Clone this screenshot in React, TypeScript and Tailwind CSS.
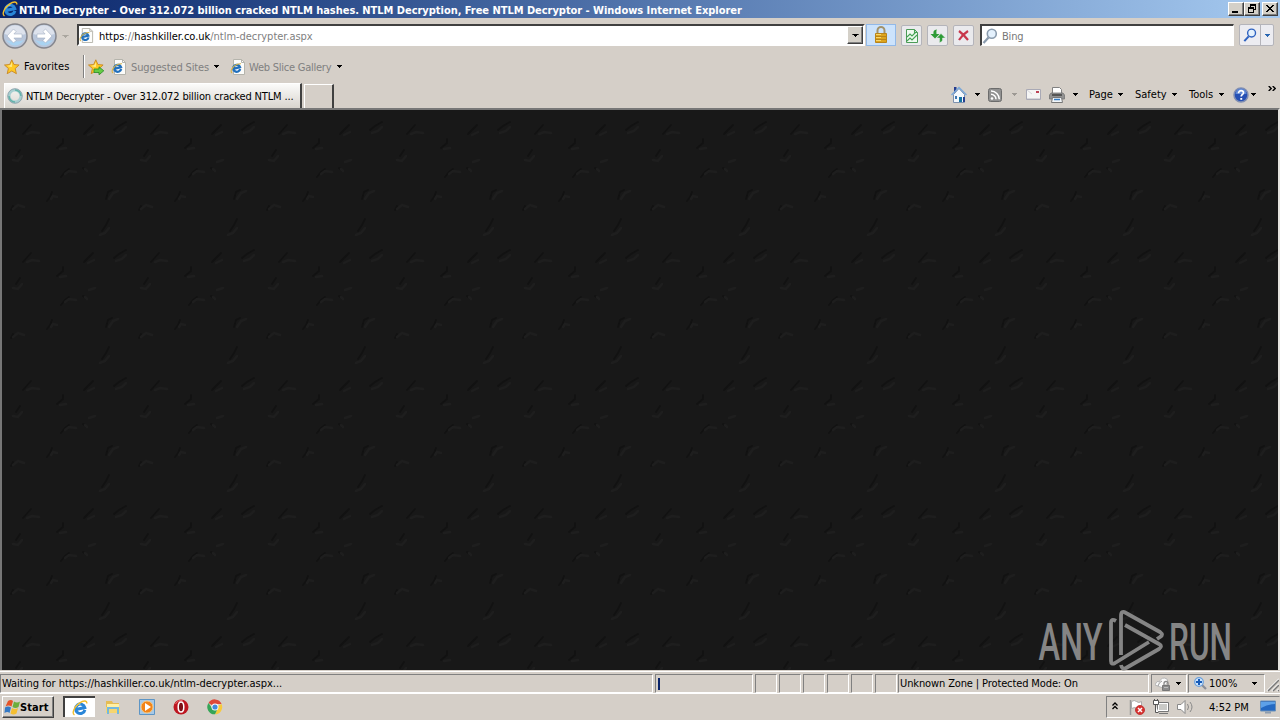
import type { ReactNode } from "react";
import clsx from "clsx";

type IconProps = { className?: string };

const IeLogo = ({ className }: IconProps) => (
  <svg viewBox="0 0 16 16" className={clsx("shrink-0", className)}>
    <g transform="rotate(-12 8 8.500)">
      <path
        d="M12.500 10.800A4.700 4.700 0 1 1 12.900 8.600H5"
        fill="none"
        stroke="#2a86d8"
        strokeWidth="3"
      />
      <path d="M4 6.500C5 4.600 7 3.600 9.500 4.200" fill="none" stroke="#9ad9f8" strokeWidth="1.200" />
    </g>
    <path
      d="M2.500 15C-.5 13 2.200 6.800 7.400 3.200C11.500.3 15.200.3 14.800 3.500"
      fill="none"
      stroke="#f1bd2c"
      strokeWidth="1.400"
    />
  </svg>
);

const PageIcon = ({ className }: IconProps) => (
  <svg viewBox="0 0 16 16" className={clsx("shrink-0", className)}>
    <path d="M3.500.5h8l3 3v12h-11z" fill="#fcfcfa" stroke="#b5b4ac" />
    <path d="M11.500.5v3h3" fill="none" stroke="#b5b4ac" />
    <g transform="rotate(-14 6.500 9)">
      <path
        d="M9.800 10.800A3.500 3.500 0 1 1 10.100 9H4"
        fill="none"
        stroke="#2270bd"
        strokeWidth="2.300"
      />
    </g>
    <path d="M2 14C-1 12 4 4.500 11 4.800" fill="none" stroke="#d9b447" strokeWidth="1.100" />
  </svg>
);

const Star = ({ arrow = false }: { arrow?: boolean }) => (
  <svg viewBox="0 0 16 16" className="size-4 shrink-0">
    <path
      d="M7.800.8l2.100 4.700 5.200.5-3.900 3.500 1.200 5.200-4.600-2.700-4.600 2.700 1.200-5.200L.5 6l5.200-.5z"
      fill="#ffc925"
      stroke="#c78724"
      strokeWidth=".9"
    />
    <path d="M7.800 3v5L3 7l3.500-.7z" fill="#fff09a" />
    {arrow && (
      <path d="M6 10h5V7.800l4.800 4-4.800 4v-2.300H6z" fill="#65cc45" stroke="#278b27" strokeWidth=".8" />
    )}
  </svg>
);

const Caret = ({ className = "fill-black" }: IconProps) => (
  <svg viewBox="0 0 5 3" className={clsx("h-[3px] w-[5px] shrink-0", className)} shapeRendering="crispEdges">
    <path d="M0 0h5v1H4v1H3v1H2V2H1V1H0z" />
  </svg>
);

const NavButton = ({ flip = false }: { flip?: boolean }) => (
  <svg viewBox="0 0 26 26" className="size-[26px] shrink-0">
    <circle cx="13" cy="13" r="12" fill="#b9c6da" stroke="#85868d" strokeWidth="1.500" />
    <path d="M2.500 11a10.700 10.700 0 0 1 21 0q-10.500 4-21 0" fill="#dde2ec" />
    <path d="M4 17q9 11 18 0-9 3-18 0" fill="#a9d3f1" />
    <g transform={flip ? "translate(26 0) scale(-1 1)" : undefined}>
      <path
        d="M5 13l6.500-7 2.600 2.600-2.200 2.400H20v4h-8.100l2.200 2.400-2.600 2.600z"
        fill="#fff"
        stroke="#a3aec2"
        strokeWidth=".6"
      />
    </g>
  </svg>
);

const LockIcon = () => (
  <svg viewBox="0 0 16 18" className="h-[18px] w-4">
    <path d="M4.500 8V4.500a3.500 3.500 0 0 1 7 0V8" fill="none" stroke="#a3936b" strokeWidth="2" />
    <path d="M2.500 7.500h11v9h-11z" fill="#dca41e" stroke="#b8841a" />
    <path d="M3 10.500h10M3 13.500h10" stroke="#b88419" />
    <path d="M3 8.500h5M3 11.500h5M3 14.500h5" stroke="#f8d66c" />
  </svg>
);

const Magnifier = ({ className, stroke }: { className?: string; stroke: string }) => (
  <svg viewBox="0 0 16 16" className={clsx("shrink-0", className)}>
    <path d="M6.500 9.500l-5 5.500" stroke={stroke} strokeWidth="2.300" />
    <circle cx="9.800" cy="5.800" r="4.500" fill="#e4f1fd" stroke={stroke} strokeWidth="1.600" />
  </svg>
);

const HomeIcon = () => (
  <svg viewBox="0 0 16 17" className="h-[17px] w-4 shrink-0">
    <path d="M3 1h2.500v6H3z" fill="#253b8e" />
    <path d="M2.500 8.500l5.500-6 5.500 6v8h-11z" fill="#f4f8fc" stroke="#7d91ae" />
    <path d="M.5 9L8 1.500 15.500 9" fill="none" stroke="#7ba9d9" strokeWidth="1.500" />
    <path d="M8 11h3v5H8z" fill="#1675a4" />
    <path d="M4 10h2v3H4z" fill="#3f78b2" />
    <path d="M12 11h2v5h-2z" fill="#263f90" />
  </svg>
);

const FeedIcon = () => (
  <svg viewBox="0 0 14 14" className="size-3.5 shrink-0">
    <rect x=".5" y=".5" width="13" height="13" rx="2" fill="#919191" stroke="#6c6c6c" />
    <circle cx="4" cy="10.500" r="1.300" fill="#fff" />
    <path d="M3 6.300a5 5 0 0 1 5 5M3 3a8.300 8.300 0 0 1 8.300 8.300" fill="none" stroke="#fff" strokeWidth="1.500" />
  </svg>
);

const MailIcon = () => (
  <svg viewBox="0 0 15 11" className="h-[11px] w-[15px] shrink-0">
    <path d="M.5.5h14v10H.5z" fill="#f5f5f5" stroke="#a9a9b5" />
    <path d="M1 1l5 4M1 9.500h13" fill="none" stroke="#d6d6d9" />
    <path d="M10 2h3v2h-3z" fill="#bd4356" />
  </svg>
);

const PrinterIcon = () => (
  <svg viewBox="0 0 16 16" className="size-4 shrink-0">
    <path d="M3.500.5h7l2 2V7h-9z" fill="#fff" stroke="#818181" />
    <path d="M2 6h12l1.500 2v4H.5V8z" fill="#929292" stroke="#737373" strokeWidth=".8" />
    <path d="M3 7h10v2H3z" fill="#555" />
    <path d="M3.500 10.500h9l1 5h-11z" fill="#f2f5f8" stroke="#777" />
    <path d="M5 12.500h6" stroke="#347cc6" strokeWidth="1.500" />
  </svg>
);

const HelpIcon = () => (
  <svg viewBox="0 0 16 16" className="size-4 shrink-0">
    <circle cx="8" cy="8" r="7" fill="#2650b4" stroke="#808eb2" strokeWidth="1.500" />
    <path d="M2.500 7a5.500 5.500 0 0 1 11 0" fill="#6089d6" />
    <path d="M5.500 6.300c0-3.700 5.300-3.300 5-.3-.2 1.600-2.300 1.500-2.300 3.400" fill="none" stroke="#fff" strokeWidth="1.700" />
    <path d="M7.300 11h1.900v1.800H7.300z" fill="#fff" />
  </svg>
);

const Chevrons = ({ className }: IconProps) => (
  <svg viewBox="0 0 8 5" className={clsx("h-[5px] w-2 shrink-0", className)}>
    <path d="M.7 0l2.500 2.500L.7 5M4.700 0l2.500 2.500L4.700 5" fill="none" stroke="#000" strokeWidth="1.400" />
  </svg>
);

const CommandButton = ({ children }: { children: ReactNode }) => (
  <button className="flex h-[21px] w-[21px] shrink-0 items-center justify-center rounded-xs border border-[#b4b4ba] bg-[#eaeaed]">
    {children}
  </button>
);

const WindowButton = ({ children }: { children: ReactNode }) => (
  <button className="flex h-3.5 w-4 shrink-0 border border-t-white border-r-[#404040] border-b-[#404040] border-l-white bg-[#d4d0c8] shadow-[inset_-1px_-1px_0_#808080]">
    <svg viewBox="0 0 14 12" className="h-3 w-3.5" shapeRendering="crispEdges">
      {children}
    </svg>
  </button>
);

const TitleBar = () => (
  <div className="flex h-[18px] shrink-0 items-center bg-linear-to-r from-[#0a246a] to-[#a6caf0] pr-0.5 pl-0.5">
    <IeLogo className="size-4" />
    <span className="ml-px w-[730px] pt-0.5 text-[11px] font-bold tracking-[-0.035px] text-white">
      NTLM Decrypter - Over 312.072 billion cracked NTLM hashes. NTLM Decryption, Free NTLM Decryptor - Windows
      Internet Explorer
    </span>
    <div className="ml-auto flex">
      <WindowButton>
        <path d="M3 8h6v2H3z" />
      </WindowButton>
      <WindowButton>
        <path d="M5 1h6v6H9V6h1V3H6v1H5z" />
        <path d="M3 4h6v6H3zM4 6v3h4V6z" fillRule="evenodd" />
      </WindowButton>
      <div className="w-0.5" />
      <WindowButton>
        <path d="M3 2h2v1h1v1h2V3h1V2h2v1h-1v1H9v1H8v1h1v1h1v1h1v1H9V8H8V7H6v1H5v1H3V8h1V7h1V6h1V5H5V4H4V3H3z" />
      </WindowButton>
    </div>
  </div>
);

const AddressRow = () => (
  <div className="flex h-[34px] shrink-0 items-start pt-[6px]">
    <div className="-mt-px ml-0.5 flex w-[55px] justify-between">
      <NavButton />
      <NavButton flip />
    </div>
    <Caret className="mt-[11px] ml-[6px] scale-125 fill-[#aaa69f]" />
    <div className="ml-[9px] flex h-[22px] w-[788px] items-center border-2 border-t-[#404040] border-r-white border-b-white border-l-[#404040] bg-white">
      <PageIcon className="size-[15px]" />
      <span className="ml-[5px] pt-0.5 text-[11px] tracking-[-0.03px] text-[#808080]">
        <span className="text-black">https</span>://<span className="text-black">hashkiller.co.uk</span>
        /ntlm-decrypter.aspx
      </span>
      <button className="ml-auto flex h-[18px] w-4 items-center justify-center border border-t-white border-r-[#404040] border-b-[#404040] border-l-white bg-[#d4d0c8] shadow-[inset_-1px_-1px_0_#808080]">
        <Caret className="scale-125" />
      </button>
    </div>
    <button className="ml-px flex h-[22px] w-[30px] items-center justify-center border border-[#92b9e8] bg-[#cce3fc]">
      <LockIcon />
    </button>
    <div className="mt-px ml-[5px] flex gap-[5px]">
      <CommandButton>
        <svg viewBox="0 0 12 14" className="h-3.5 w-3">
          <path d="M.5.5h8l3 3v10H.5z" fill="#effaf0" stroke="#4b9b57" />
          <path d="M8.500.5v3h3M1 8l3-3 2 2 4-4M1 12l3-3 2 2 5-5" fill="none" stroke="#45a355" strokeWidth="1.100" />
        </svg>
      </CommandButton>
      <CommandButton>
        <svg viewBox="0 0 16 14" className="h-3.5 w-4 shrink-0">
          <path d="M7 .5C3 1 3.500 3 3.500 5H.5l4.500 4.500L9.500 5h-3c0-2-.5-3 .5-4.500" fill="#2e9b37" />
          <path d="M9 13.500c4-.5 3.500-2.500 3.500-4.500h3L11 4.500 6.500 9h3c0 2 .5 3-.5 4.500" fill="#2e9b37" stroke="#eaeaed" strokeWidth=".5" />
        </svg>
      </CommandButton>
      <CommandButton>
        <svg viewBox="0 0 13 13" className="size-[13px]">
          <path d="M2 2q4 3 9 9M11 2Q5 6 2 11" fill="none" stroke="#c8374b" strokeWidth="2.200" />
        </svg>
      </CommandButton>
    </div>
    <div className="ml-[6px] flex h-[22px] w-[254px] items-center border border-t-2 border-l-2 border-t-[#404040] border-r-white border-b-white border-l-[#404040] bg-white">
      <Magnifier className="size-4" stroke="#8b9cae" />
      <span className="ml-1 pt-0.5 text-[11px] tracking-[-0.2px] text-[#777]">Bing</span>
    </div>
    <div className="ml-[5px] flex h-[22px] w-[35px] rounded-xs border border-[#b4b4ba] bg-[#ececf1]">
      <div className="flex w-[21px] items-center justify-center border-r border-[#b4b4ba]">
        <Magnifier className="size-[14px]" stroke="#2e62c0" />
      </div>
      <div className="flex flex-1 items-center justify-center">
        <Caret className="fill-[#2866b2]" />
      </div>
    </div>
  </div>
);

const FavoritesRow = () => (
  <div className="flex h-7 shrink-0 items-center pt-px pl-1 text-[11px]">
    <Star />
    <span className="ml-1 w-[46px] tracking-[0.1px]">Favorites</span>
    <div className="ml-[13px] h-[23px] w-0.5 border-r border-l border-r-white border-l-[#808080]" />
    <div className="ml-[3px] flex">
      <Star arrow />
    </div>
    <PageIcon className="ml-[7px] size-4" />
    <span className="ml-1 w-[79px] pt-px tracking-[-0.12px] text-[#808080]">Suggested Sites</span>
    <Caret className="ml-1" />
    <PageIcon className="ml-[11px] size-4" />
    <span className="ml-[3px] w-[83px] pt-px tracking-[-0.24px] text-[#808080]">Web Slice Gallery</span>
    <Caret className="ml-[5px]" />
  </div>
);

const TabRow = () => (
  <div className="flex h-7 shrink-0 pl-1 text-[11px]">
    <div className="mt-[3px] flex h-[25px] w-[298px] items-center border-t border-r-2 border-l border-t-white border-r-[#404040] border-l-white bg-linear-to-b from-[#fbfbfa] to-[#d9d5ce]">
      <svg viewBox="0 0 16 16" className="ml-0.5 size-4 shrink-0">
        <circle cx="8" cy="8" r="6" fill="none" stroke="#a9cfd1" strokeWidth="3" />
        <path d="M8 2a6 6 0 0 1 6 6M8 14a6 6 0 0 1-6-6" fill="none" stroke="#62b3aa" strokeWidth="1.500" />
        <circle cx="8" cy="8" r="7.300" fill="none" stroke="#82949f" strokeWidth=".7" />
      </svg>
      <span className="ml-[3px] w-[270px] pt-px tracking-[-0.15px]">
        NTLM Decrypter - Over 312.072 billion cracked NTLM ...
      </span>
    </div>
    <div className="mt-1 ml-0.5 h-6 w-[30px] border-t border-r-2 border-l border-t-white border-r-[#404040] border-l-white" />
    <div className="ml-auto flex h-7 w-[329px] items-center pt-px">
      <HomeIcon />
      <Caret className="ml-2" />
      <div className="ml-2 flex">
        <FeedIcon />
      </div>
      <Caret className="ml-[10px] fill-[#9d9994]" />
      <div className="ml-[9px] flex">
        <MailIcon />
      </div>
      <div className="ml-2 flex">
        <PrinterIcon />
      </div>
      <Caret className="ml-2" />
      <span className="ml-[11px] w-[25px]">Page</span>
      <Caret className="ml-1" />
      <span className="ml-3 w-[33px]">Safety</span>
      <Caret className="ml-1" />
      <span className="ml-[12px] w-[27px]">Tools</span>
      <Caret className="ml-[3px]" />
      <div className="ml-[9px] flex">
        <HelpIcon />
      </div>
      <Caret className="ml-0.5" />
      <Chevrons className="mb-3 ml-3" />
    </div>
  </div>
);

// Shadow and highlight strokes of one 128px tile
const shadows =
  "M22 26l8-9M83 26l9-9M113 22l5-4 7-4M56 40l6-5v-4M15 48l4-6M60 69l4-5 4-3M82 60l4 3M105 91l2-7 4-2M46 93l3-4 2-5M10 102l2-4M101 123l4-6 3-6";
const highlights =
  "M26 26l5-2 7 1M87 27l6-3M115 25l6-2 4-4M59 41l6-1M12 52l5 1 4-5M64 66l4-3 7 1M84 61l2 2M88 54l6-2M108 91l4-6 5-2M50 91l2-3 4 1M12 101l5-4 6 2M99 127l5-2 4-5";

const PageBackground = () => (
  <svg className="block h-full w-full">
    <defs>
      <pattern id="dents" x="-1" y="-2" width="128" height="128" patternUnits="userSpaceOnUse">
        <rect width="128" height="128" fill="#181818" />
        <g fill="none" strokeLinecap="round" className="blur-[0.7px]">
          <path d={shadows} stroke="#121212" strokeWidth="1.800" />
          <path d={highlights} stroke="#1e1e1e" strokeWidth="2.500" />
        </g>
      </pattern>
    </defs>
    <rect width="100%" height="100%" fill="url(#dents)" />
  </svg>
);

const Watermark = () => (
  <svg
    viewBox="0 0 200 62"
    className="absolute right-[43px] bottom-0 h-[62px] w-[200px] overflow-visible fill-[#858585] font-['Roboto'] text-[52px]"
  >
    <text x="3.500" y="51.500" textLength="64" lengthAdjust="spacingAndGlyphs" className="font-medium">
      ANY
    </text>
    <g fill="none" stroke="#858585" strokeWidth="3.800" strokeLinejoin="round">
      <path d="M81 13q-5-3-5 2v38q0 4 4 2l34-21" />
      <path d="M86 47V8q0-6 5-3l34 19q4 3 0 5l-3 2" />
      <path d="M90 17l34 19q4 2 0 5L91 60q-4 2-5-3" />
    </g>
    <text x="134" y="51.500" textLength="63" lengthAdjust="spacingAndGlyphs" className="font-medium">
      RUN
    </text>
  </svg>
);

const StatusCell = ({ className, children }: { className?: string; children?: ReactNode }) => (
  <div
    className={clsx(
      "flex h-[19px] shrink-0 items-center border border-t-[#808080] border-r-white border-b-white border-l-[#808080]",
      className,
    )}
  >
    {children}
  </div>
);

const StatusBar = () => (
  <div className="mt-px flex h-[22px] shrink-0 border-t border-white pt-0.5 text-[11px]">
    <StatusCell className="w-[653px]">
      <span className="ml-px tracking-[-0.02px]">Waiting for https://hashkiller.co.uk/ntlm-decrypter.aspx...</span>
    </StatusCell>
    <StatusCell className="mr-0.5 ml-0.5 w-[98px] pl-0.5">
      <div className="h-3 w-0.5 bg-[#0a246a]" />
    </StatusCell>
    <div className="flex gap-0.5">
      {Array.from({ length: 6 }, (_, i) => (
        <StatusCell key={i} className="w-[22px]" />
      ))}
    </div>
    <StatusCell className="ml-px w-[251px]">
      <span className="ml-px tracking-[-0.12px]">Unknown Zone | Protected Mode: On</span>
    </StatusCell>
    <StatusCell className="ml-0.5 w-[36px] pl-[3px]">
      <svg viewBox="0 0 16 14" className="h-3.5 w-4 shrink-0">
        <path d="M0 8q2-5 4-3 3-6 8-3l1 3-5 6z" fill="#fafafa" stroke="#b5b5b5" />
        <path d="M3 9q1-4 4-5" fill="none" stroke="#999" />
        <path d="M9 9V6.500a2 2 0 0 1 4 0V9" fill="none" stroke="#888" strokeWidth="1.300" />
        <path d="M7.500 8.500h7v5h-7z" fill="#8c8c8c" stroke="#777" />
        <path d="M9 10.500h4" stroke="#bbb" />
      </svg>
      <Caret className="ml-[5px]" />
    </StatusCell>
    <StatusCell className="ml-px w-[77px] border-r-transparent pl-1">
      <svg viewBox="0 0 16 16" className="size-4 shrink-0">
        <path d="M8.500 8.500l4.500 4.500" stroke="#8b8f98" strokeWidth="2.200" />
        <circle cx="6" cy="6" r="4.300" fill="#cfe5fb" stroke="#6ba0dc" strokeWidth="1.200" />
        <path d="M3 6h6M6 3v6" stroke="#195cb8" strokeWidth="2" />
      </svg>
      <span className="w-[29px]">100%</span>
      <Caret className="ml-[14px]" />
    </StatusCell>
    <svg viewBox="0 0 14 18" className="h-[18px] w-[14px]">
      <path d="M2 17L14 5M7 17l7-7M12 17l2-2" stroke="#fff" strokeWidth="1.500" />
      <path d="M3 17L14 6M8 17l6-6M13 17l1-1" stroke="#777" strokeWidth="1.500" />
    </svg>
  </div>
);

const StartFlag = () => (
  <svg viewBox="0 0 17 16" className="h-4 w-[17px] shrink-0">
    <path d="M4 2q3-2 5 0L7.500 7.500q-3-2-6 0z" fill="#e55327" />
    <path d="M10 2.500q3 2 6 0L14.500 8q-3 2-6 0z" fill="#6cae3d" />
    <path d="M1 8.500q3-2 6 0L5.500 14q-2-2-5 0z" fill="#3479c5" />
    <path d="M8 9q3 2 6 0l-1.500 5.500q-3 2-6 0z" fill="#f5bf31" />
  </svg>
);

const Taskbar = () => (
  <div className="flex h-[27px] shrink-0 items-start border-t border-white pt-0.5">
    <button className="ml-0.5 flex h-[22px] w-[52px] items-center border border-t-white border-r-[#404040] border-b-[#404040] border-l-white pl-px text-[11px] font-bold shadow-[inset_-1px_-1px_0_#808080]">
      <StartFlag />
      <span className="-ml-px tracking-[0.1px]">Start</span>
    </button>
    <button className="ml-[9px] flex h-[21px] w-8 items-center justify-center border-t-2 border-l-2 border-t-[#404040] border-l-[#404040] bg-white">
      <IeLogo className="size-4" />
    </button>
    <div className="mt-[3px] ml-[10px] flex">
      <svg viewBox="0 0 16 16" className="size-4">
        <path d="M1 2h6l1 2h6v10H1z" fill="#e5bc55" />
        <path d="M2 5h12v6H2z" fill="#fff0a3" />
        <path d="M1 8h14v6H1z" fill="#f5d56f" />
        <path d="M4 15v-5h8v5h2V8H2v7z" fill="#73b8de" />
      </svg>
      <svg viewBox="0 0 16 16" className="ml-[18px] size-4">
        <path d="M.5.5h15v15H.5z" fill="#a7c9e7" stroke="#5d95c5" />
        <circle cx="8" cy="8" r="6" fill="#f28418" stroke="#fac77c" />
        <path d="M6 4l6 4-6 4z" fill="#fff" />
      </svg>
      <svg viewBox="0 0 16 16" className="ml-[18px] size-4">
        <circle cx="8" cy="8" r="7.500" fill="#bd1620" />
        <path d="M2.500 5q2-4 7-3.500" stroke="#ed7373" fill="none" />
        <ellipse cx="8" cy="8" rx="2.800" ry="5" fill="#7b1017" stroke="#fff" strokeWidth="1.500" />
      </svg>
      <svg viewBox="0 0 16 16" className="ml-[18px] size-4">
        <path d="M8 8L1.500 4A7.300 7.300 0 0 1 14.600 5H8z" fill="#df4939" />
        <path d="M8 8l6.600-3A7.300 7.300 0 0 1 8 15.300L10.500 10z" fill="#f7ca3c" />
        <path d="M8 8l2.500 2L8 15.300A7.300 7.300 0 0 1 1.500 4L5 9z" fill="#36a557" />
        <circle cx="8" cy="8" r="3.500" fill="#fff" />
        <circle cx="8" cy="8" r="2.600" fill="#438bdd" />
      </svg>
    </div>
    <div className="ml-auto flex h-[22px] w-[174px] items-center border border-t-[#808080] border-r-transparent border-b-white border-l-[#808080] pl-[5px]">
      <svg viewBox="0 0 6 8" className="mb-0.5 h-2 w-1.5">
        <path d="M.5 3.500L3 1l2.500 2.500M.5 7L3 4.500 5.500 7" fill="none" stroke="#000" strokeWidth="1.300" />
      </svg>
      <svg viewBox="0 0 17 16" className="ml-[11px] h-4 w-[17px]">
        <path d="M1.500 1v15" stroke="#999" strokeWidth="1.500" />
        <path d="M2.500 2.500q3-2 5 0t5 0v7q-4 2-5 0t-5 0z" fill="#fff" stroke="#aaa" />
        <circle cx="11" cy="11" r="4.500" fill="#d7302d" stroke="#c23a3a" />
        <path d="M9 9l4 4m0-4l-4 4" stroke="#fff" strokeWidth="1.500" />
      </svg>
      <svg viewBox="0 0 16 16" className="ml-[7px] size-4">
        <path d="M4.500 3.500h11v9h-11z" fill="#fff" stroke="#777" />
        <path d="M6 5h8v6H6z" fill="#c9c9c6" />
        <path d="M6 14.500h9" stroke="#777" />
        <path d="M.5 1.500h5v4h-5zM2.500 5.500v8h3" fill="#fff" stroke="#555" />
        <path d="M1.500 0v2m3-2v2" stroke="#555" />
      </svg>
      <svg viewBox="0 0 17 16" className="ml-2 h-4 w-[17px]">
        <path d="M.5 5.500H4l4-4v13l-4-4H.5z" fill="#fff" stroke="#888" />
        <path d="M10.500 5q2 3 0 6M13 3q4 5 0 10" fill="none" stroke="#888" />
      </svg>
      <span className="ml-[15px] w-10 text-[11px]">4:52 PM</span>
      <svg viewBox="0 0 16 14" className="ml-[11px] h-3.5 w-4">
        <path d="M.5 1h15v10H.5z" fill="#2469c2" stroke="#6b91b8" />
        <path d="M1 2h14v2Q8 4 1 8z" fill="#5da1e8" />
        <path d="M5 12.500h6" stroke="#8d9db0" strokeWidth="2" />
      </svg>
    </div>
  </div>
);

export default function App() {
  return (
    <div className="flex h-[720px] w-[1280px] flex-col overflow-hidden bg-[#d5cfc8] font-['DejaVu_Sans_Condensed','DejaVu_Sans',sans-serif] leading-none whitespace-nowrap text-black">
      <TitleBar />
      <AddressRow />
      <FavoritesRow />
      <TabRow />
      <main className="relative h-[562px] shrink-0 border-t-2 border-r-2 border-l-2 border-t-[#777] border-r-[#e5e3df] border-l-[#777] bg-[#181818]">
        <PageBackground />
        <Watermark />
      </main>
      <StatusBar />
      <Taskbar />
    </div>
  );
}
